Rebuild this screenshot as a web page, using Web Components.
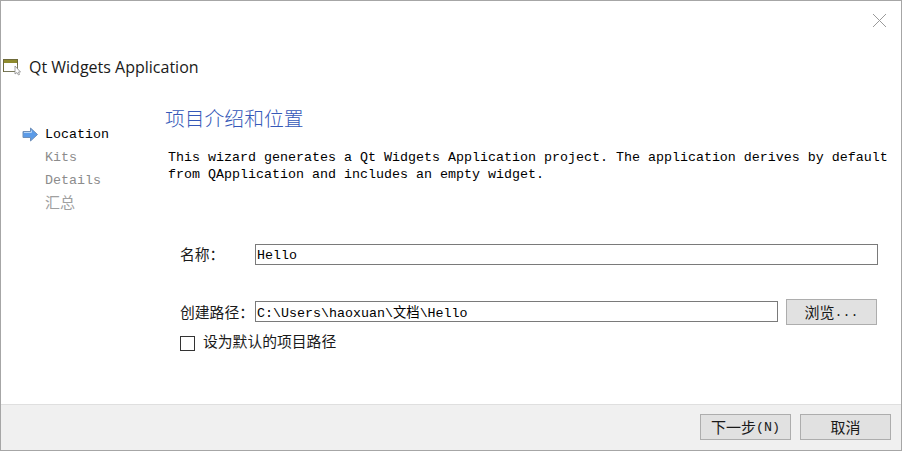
<!DOCTYPE html>
<html lang="zh">
<head>
<meta charset="utf-8">
<title>Qt Widgets Application</title>
<style>
  html, body { margin: 0; padding: 0; background: #fff; }
  body {
    font-family: "Liberation Mono", "Noto Sans CJK SC", monospace;
    font-size: 13.33px;
    color: #000;
  }
  .latin { font-size: 13.33px; }
</style>
</head>
<body>
<wizard-dialog>
  <wizard-header slot="header" title-text="Qt Widgets Application"></wizard-header>
  <wizard-steps slot="steps">
    <wizard-step active>Location</wizard-step>
    <wizard-step>Kits</wizard-step>
    <wizard-step>Details</wizard-step>
    <wizard-step cjk>汇总</wizard-step>
  </wizard-steps>
  <location-page slot="page"></location-page>
  <wizard-button slot="footer">下一步<span class="latin">(N)</span></wizard-button>
  <wizard-button slot="footer">取消</wizard-button>
</wizard-dialog>

<script>
  class WizardDialog extends HTMLElement {
    constructor() {
      super();
      this.attachShadow({ mode: "open" });
      this.shadowRoot.innerHTML = `
        <style>
          :host {
            display: flex;
            flex-direction: column;
            box-sizing: border-box;
            width: 902px;
            height: 451px;
            border: 1px solid #a6a6a6;
            background: #fff;
            overflow: hidden;
          }
          .close {
            display: flex;
            justify-content: flex-end;
            padding: 12px 14px 0 0;
            height: 15px;
          }
          .close svg { display: block; }
          .main {
            flex: 1;
            display: flex;
            min-height: 0;
          }
          .steps { width: 164px; flex: none; padding: 44px 0 0 21px; box-sizing: border-box; }
          .page { flex: 1; min-width: 0; padding-top: 25px; }
          footer {
            flex: none;
            height: 46px;
            box-sizing: border-box;
            background: #f0f0f0;
            border-top: 1px solid #dfdfdf;
            display: flex;
            justify-content: flex-end;
            gap: 9px;
            padding: 9px 10px 0 0;
          }
        </style>
        <div class="close">
          <svg width="15" height="15" viewBox="0 0 15 15" fill="none" stroke="#9a9a9a" stroke-width="1">
            <path d="M1 1 L14 14 M14 1 L1 14"/>
          </svg>
        </div>
        <slot name="header"></slot>
        <div class="main">
          <div class="steps"><slot name="steps"></slot></div>
          <div class="page"><slot name="page"></slot></div>
        </div>
        <footer><slot name="footer"></slot></footer>
      `;
    }
  }

  class WizardHeader extends HTMLElement {
    constructor() {
      super();
      this.attachShadow({ mode: "open" });
      this.shadowRoot.innerHTML = `
        <style>
          :host {
            display: flex;
            align-items: center;
            gap: 8px;
            height: 24px;
            padding: 27px 0 0 2px;
            font-family: "Open Sans", "Noto Sans", sans-serif;
            font-size: 16px;
            color: #1a1a1a;
          }
          svg { display: block; flex: none; }
        </style>
        <svg width="18" height="17" viewBox="0 0 18 17">
          <rect x="0.5" y="0.5" width="14" height="12" fill="#fff" stroke="#6e6a3a"/>
          <rect x="1" y="1" width="13" height="3" fill="#8f8b2e"/>
          <path d="M1 12.5 H14.5 V6" fill="none" stroke="#77775a"/>
          <path d="M12 7 L12 15 L14 13.5 L15.5 16 L16.5 15.5 L15.5 13 L17.5 13 Z" fill="#fff" stroke="#8a8a8a" stroke-width="0.8"/>
        </svg>
        <span></span>
      `;
      this.shadowRoot.querySelector("span").textContent = this.getAttribute("title-text");
    }
  }

  class WizardSteps extends HTMLElement {
    constructor() {
      super();
      this.attachShadow({ mode: "open" });
      this.shadowRoot.innerHTML = `
        <style>
          :host { display: flex; flex-direction: column; gap: 0; }
        </style>
        <slot></slot>
      `;
    }
  }

  class WizardStep extends HTMLElement {
    constructor() {
      super();
      this.attachShadow({ mode: "open" });
      this.shadowRoot.innerHTML = `
        <style>
          :host {
            display: flex;
            align-items: center;
            height: 23px;
            color: #8c8c8c;
            font-family: "Liberation Mono", "Noto Sans CJK SC", monospace;
            font-size: 13.33px;
          }
          :host([active]) { color: #000; }
          :host([cjk]) { font-size: 15px; height: 19px; color: #a0a0a0; }
          .mark { width: 23px; flex: none; display: flex; }
          svg { display: none; }
          :host([active]) svg { display: block; }
        </style>
        <div class="mark">
          <svg width="17" height="15" viewBox="0 0 17 15">
            <path d="M1 4.5 H8.5 V1 L15.5 7.5 L8.5 14 V10.5 H1 Z" fill="#5b9be8" stroke="#6f8fb8"/>
            <path d="M2 5.5 H9.5 V3.5" fill="none" stroke="#b5d4f7"/>
          </svg>
        </div>
        <slot></slot>
      `;
    }
  }

  class WizardButton extends HTMLElement {
    constructor() {
      super();
      this.attachShadow({ mode: "open" });
      this.shadowRoot.innerHTML = `
        <style>
          :host {
            display: flex;
            align-items: center;
            justify-content: center;
            box-sizing: border-box;
            width: 91px;
            height: 26px;
            background: #e1e1e1;
            border: 1px solid #adadad;
            font-family: "Liberation Mono", "Noto Sans CJK SC", monospace;
            font-size: 15px;
            color: #1a1a1a;
            flex: none;
          }
        </style>
        <slot></slot>
      `;
    }
  }

  class TextField extends HTMLElement {
    constructor() {
      super();
      this.attachShadow({ mode: "open" });
      this.shadowRoot.innerHTML = `
        <style>
          :host {
            display: flex;
            align-items: center;
            box-sizing: border-box;
            height: 21px;
            flex: 1;
            min-width: 0;
            padding-left: 1px;
            background: #fff;
            border: 1px solid #7a7a7a;
            font-family: "Liberation Mono", "Noto Sans CJK SC", monospace;
            font-size: 13.33px;
            white-space: nowrap;
          }
        </style>
        <slot></slot>
      `;
    }
  }

  class CheckField extends HTMLElement {
    constructor() {
      super();
      this.attachShadow({ mode: "open" });
      this.shadowRoot.innerHTML = `
        <style>
          :host {
            display: flex;
            align-items: flex-start;
            gap: 8px;
            height: 16px;
            line-height: 16px;
            font-family: "Liberation Mono", "Noto Sans CJK SC", monospace;
            font-size: 14.8px;
            color: #1a1a1a;
          }
          .box {
            box-sizing: border-box;
            width: 15px;
            height: 15px;
            align-self: flex-end;
            background: #fff;
            border: 1px solid #333;
          }
        </style>
        <div class="box"></div>
        <slot></slot>
      `;
    }
  }

  class LocationPage extends HTMLElement {
    constructor() {
      super();
      this.attachShadow({ mode: "open" });
      this.shadowRoot.innerHTML = `
        <style>
          :host {
            display: block;
            box-sizing: border-box;
            font-family: "Liberation Mono", "Noto Sans CJK SC", monospace;
            font-size: 13.33px;
          }
          h1 {
            margin: 0;
            height: 28px;
            font-family: "Noto Sans CJK SC", sans-serif;
            font-size: 19.8px;
            line-height: 28px;
            font-weight: 300;
            color: #3558b8;
          }
          p {
            margin: 17px 0 0 3px;
            width: 730px;
            line-height: 17px;
            white-space: pre;
          }
          .form { padding: 0 0 0 15px; }
          .row { display: flex; align-items: center; }
          .label { width: 75px; height: 17px; line-height: 21px; flex: none; font-size: 14.8px; color: #1a1a1a; }
          .name { margin-top: 61px; padding-right: 23px; }
          .name text-field { padding-top: 1px; }
          .path { margin-top: 34px; padding-right: 24px; }
          .path-field { display: flex; flex: 1; min-width: 0; align-items: flex-start; gap: 8px; }
          .path-field text-field { margin-top: 2px; }
          .check { margin-top: 10px; }
          .latin { font-size: 13.33px; }
        </style>
        <h1>项目介绍和位置</h1>
        <p>This wizard generates a Qt Widgets Application project. The application derives by default
from QApplication and includes an empty widget.</p>
        <div class="form">
          <div class="row name">
            <div class="label">名称：</div>
            <text-field>Hello</text-field>
          </div>
          <div class="row path">
            <div class="label">创建路径：</div>
            <div class="path-field">
              <text-field>C:\\Users\\haoxuan\\文档\\Hello</text-field>
              <wizard-button>浏览<span class="latin">...</span></wizard-button>
            </div>
          </div>
          <check-field class="check">设为默认的项目路径</check-field>
        </div>
      `;
    }
  }

  customElements.define("wizard-dialog", WizardDialog);
  customElements.define("wizard-header", WizardHeader);
  customElements.define("wizard-steps", WizardSteps);
  customElements.define("wizard-step", WizardStep);
  customElements.define("wizard-button", WizardButton);
  customElements.define("text-field", TextField);
  customElements.define("check-field", CheckField);
  customElements.define("location-page", LocationPage);
</script>
</body>
</html>
